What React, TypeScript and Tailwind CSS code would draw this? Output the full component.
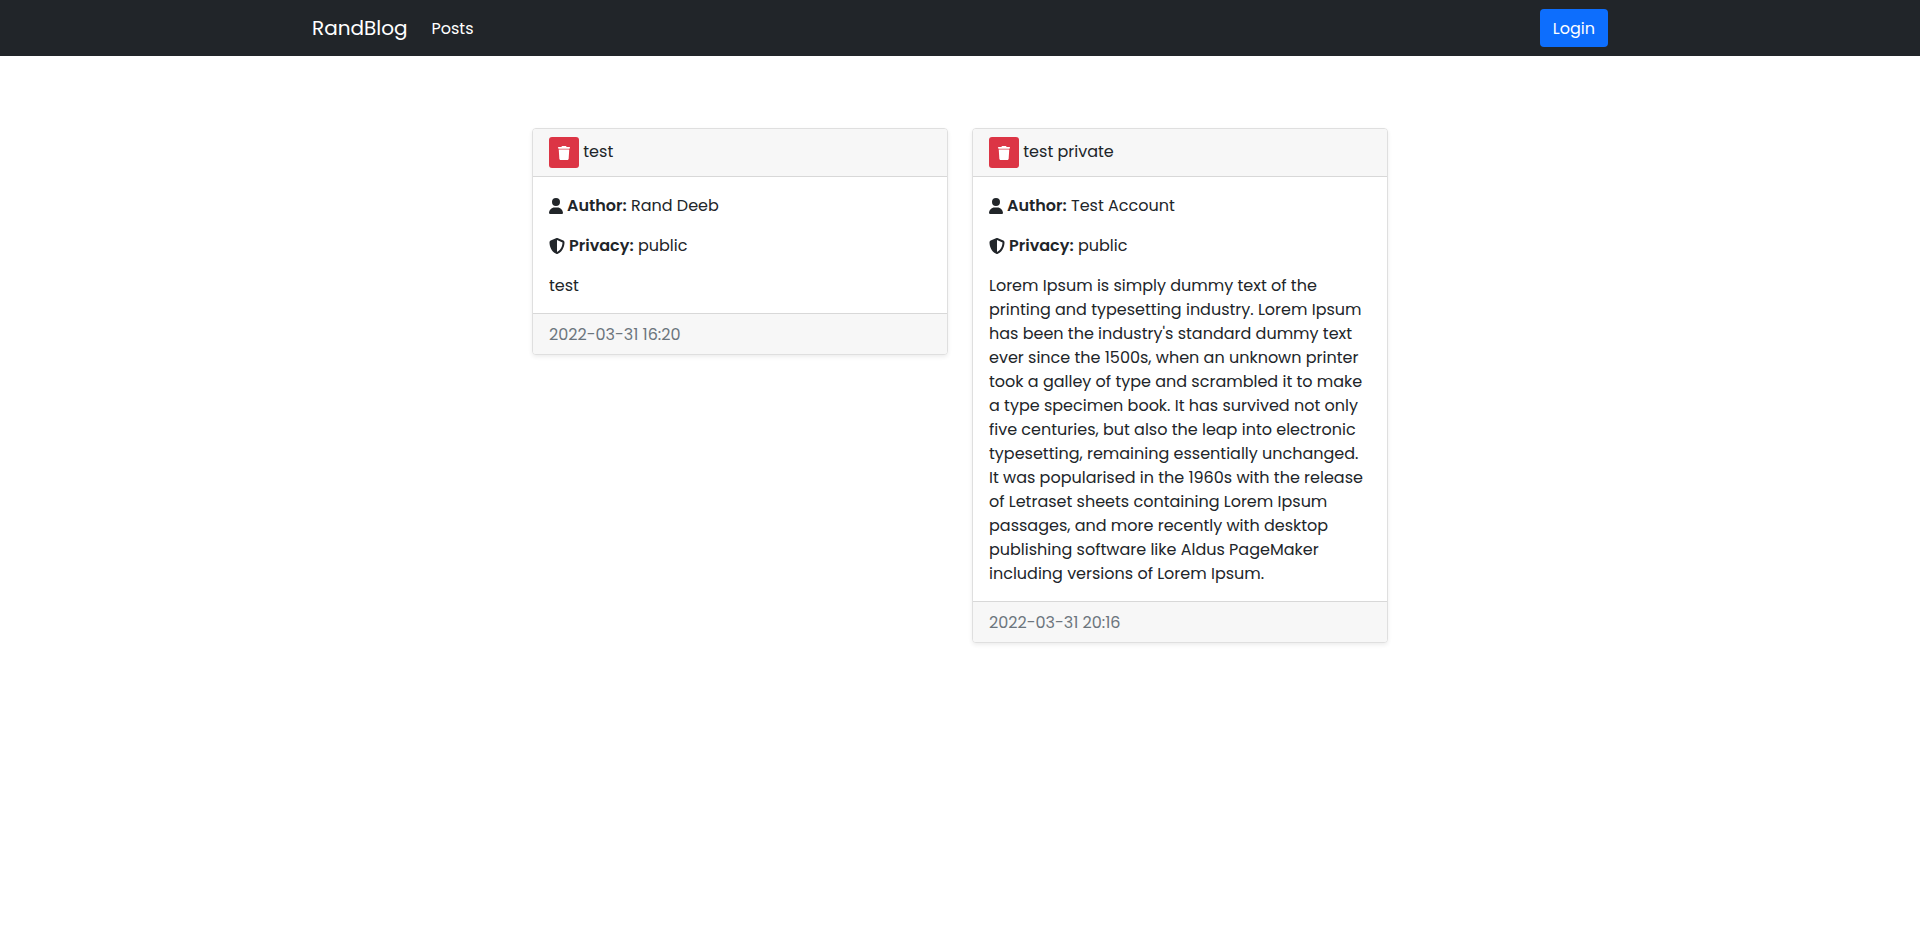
import type { ReactNode } from "react";
import { FaShieldHalved, FaTrash, FaUser } from "react-icons/fa6";

type Post = {
  title: string;
  author: string;
  privacy: string;
  body: string;
  date: string;
};

const posts: Post[] = [
  { title: "test", author: "Rand Deeb", privacy: "public", body: "test", date: "2022-03-31 16:20" },
  {
    title: "test private",
    author: "Test Account",
    privacy: "public",
    body: "Lorem Ipsum is simply dummy text of the printing and typesetting industry. Lorem Ipsum has been the industry's standard dummy text ever since the 1500s, when an unknown printer took a galley of type and scrambled it to make a type specimen book. It has survived not only five centuries, but also the leap into electronic typesetting, remaining essentially unchanged. It was popularised in the 1960s with the release of Letraset sheets containing Lorem Ipsum passages, and more recently with desktop publishing software like Aldus PageMaker including versions of Lorem Ipsum.",
    date: "2022-03-31 20:16",
  },
];

function Field({ icon, label, value }: { icon: ReactNode; label: string; value: string }) {
  return (
    <p className="flex items-center gap-1">
      {icon}
      <span>
        <strong className="font-semibold">{label}:</strong> {value}
      </span>
    </p>
  );
}

function PostCard({ post }: { post: Post }) {
  return (
    <article className="overflow-hidden rounded border border-[#dfdfdf] bg-white shadow-[0_2px_4px_rgba(0,0,0,0.075)]">
      <header className="border-b border-[#d8d8d8] bg-[#f7f7f7] px-4 py-2">
        <button
          type="button"
          aria-label="Delete post"
          className="inline-flex h-[31px] w-[30px] items-center justify-center rounded-[3px] bg-[#dc3545] align-middle text-sm text-white"
        >
          <FaTrash />
        </button>{" "}
        <h2 className="inline">{post.title}</h2>
      </header>
      <div className="flex flex-col gap-4 px-4 pt-[17px] pb-[15px]">
        <Field icon={<FaUser className="h-4 w-[14px]" />} label="Author" value={post.author} />
        <Field icon={<FaShieldHalved className="size-4" />} label="Privacy" value={post.privacy} />
        <p>{post.body}</p>
      </div>
      <footer className="border-t border-[#d8d8d8] bg-[#f7f7f7] px-4 pt-[9px] pb-[7px] text-[#6c757d]">
        {post.date}
      </footer>
    </article>
  );
}

export default function App() {
  return (
    <div className="min-h-screen bg-white font-[Poppins,Inter,sans-serif] text-base text-[#212529]">
      <nav className="bg-[#212529] text-white">
        <div className="mx-auto flex h-14 max-w-[1320px] items-center px-3">
          <a href="#" className="mr-6 text-xl">RandBlog</a>
          <a href="#posts" className="pt-0.5">Posts</a>
          <button type="button" className="ml-auto rounded bg-[#0d6efd] px-[13px] pt-2 pb-1.5">Login</button>
        </div>
      </nav>
      <main id="posts" className="mx-auto grid max-w-[880px] items-start gap-6 px-3 pt-[72px] md:grid-cols-2">
        {posts.map((post) => (
          <PostCard key={post.title} post={post} />
        ))}
      </main>
    </div>
  );
}
